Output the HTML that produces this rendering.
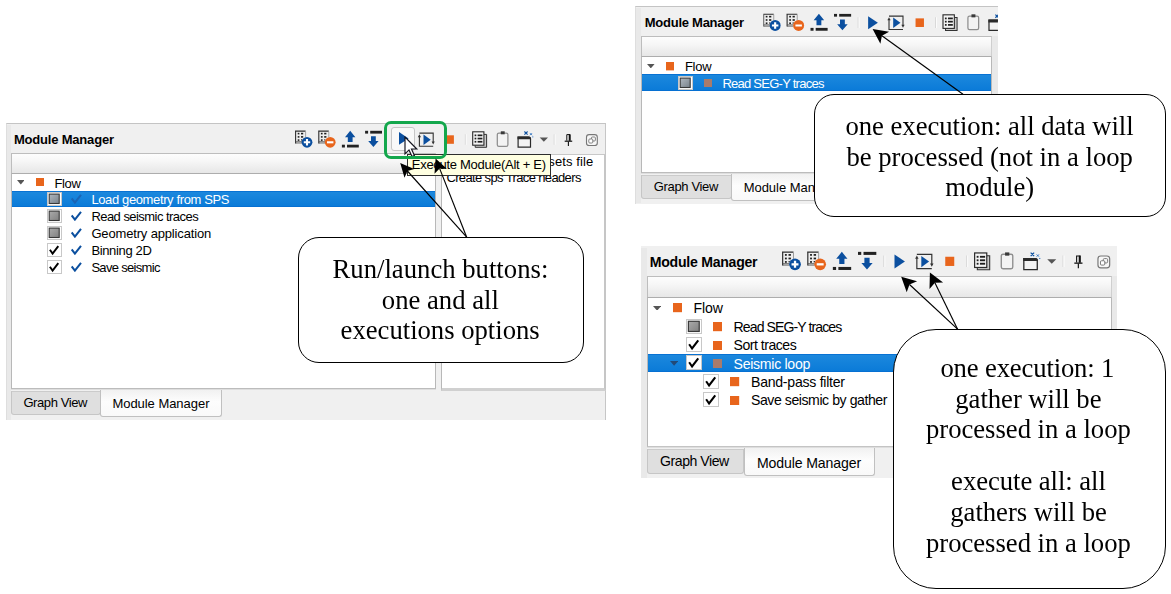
<!DOCTYPE html>
<html><head><meta charset="utf-8"><title>Module Manager</title>
<style>
html,body{margin:0;padding:0;background:#fff;}
body{width:1171px;height:594px;position:relative;overflow:hidden;font-family:"Liberation Sans",sans-serif;font-size:13px;color:#000;}
.abs,.abs>*{position:absolute;}
.ser{font-family:"Liberation Serif",serif;white-space:nowrap;will-change:opacity;}
.hdr{background:linear-gradient(#fdfdfd,#f6f6f6 40%,#eeeeee 70%,#e7e7e7);border:1px solid #bdbdbd;border-bottom:1px solid #adadad;border-right-color:#cfcfcf;box-sizing:border-box;}
.tree{background:#fff;border:1px solid #b8b8b8;border-top:none;border-bottom:1px solid #bcbcbc;box-shadow:0 1px 0 #dedede;box-sizing:border-box;}
.tab{box-sizing:border-box;border:1px solid #c4c4c4;border-top:none;border-radius:0 0 3px 3px;white-space:nowrap;text-align:center;letter-spacing:-0.1px;}
.tab.off{background:#dfdfdf;border-color:#c6c6c6;border-top:1px solid #cbcbcb;}
.tab.on{background:linear-gradient(#f1f1f1,#fdfdfd 45%,#f9f9f9);border-color:#c0c0c0;}
.callout{position:absolute;box-sizing:border-box;border:1.3px solid #000;background:#fff;font-family:"Liberation Serif",serif;font-size:26.6px;line-height:30.4px;text-align:center;white-space:nowrap;}
svg.ov{position:absolute;left:0;top:0;width:1171px;height:594px;pointer-events:none;}
</style></head><body>

<svg width="0" height="0" style="position:absolute">
<defs>
<g id="doc">
  <rect x="0.3" y="0.3" width="10.4" height="12.3" fill="#eeeeee"/>
  <path d="M0.6 0V12.9M0 0.6H10.6" stroke="#2e2e2e" stroke-width="1.1" fill="none"/>
  <path d="M0.6 11.2H7M0.6 12.5H7" stroke="#4a4a4a" stroke-width="0.75" fill="none"/>
  <path d="M10.6 1V7" stroke="#9a9a9a" stroke-width="0.9" fill="none"/>
  <g fill="#1e1e1e"><rect x="2.7" y="2.3" width="1.7" height="1.6"/><rect x="6" y="2.3" width="2.2" height="1.6"/><rect x="2.7" y="5.6" width="1.7" height="1.6"/><rect x="6" y="5.6" width="2.2" height="1.6"/><rect x="2.7" y="8.8" width="1.7" height="1.6"/><rect x="6" y="8.8" width="1.2" height="1.2"/></g>
</g>
<symbol id="tb" viewBox="0 -0.5 304 19" overflow="visible">
  <g transform="translate(0,-0.5)">
  <!-- add -->
  <use href="#doc"/>
  <circle cx="12" cy="11.8" r="5.4" fill="#0b4f9f"/>
  <path d="M12 8.6V15M8.8 11.8H15.2" stroke="#fff" stroke-width="2.1" fill="none"/>
  <!-- remove -->
  <use href="#doc" x="23.2"/>
  <circle cx="35.2" cy="11.8" r="5.4" fill="#e8651c"/>
  <path d="M32 11.8H38.4" stroke="#fff" stroke-width="2.1" fill="none"/>
  <!-- up -->
  <path d="M55.2 0.3L60.4 6.7H57.6V11.5H52.8V6.7H50Z" fill="#0b4f9f"/>
  <rect x="46.9" y="14.2" width="3" height="2.8" fill="#222"/><rect x="52" y="14.2" width="11.8" height="2.8" fill="#222"/>
  <!-- down -->
  <rect x="70.1" y="0.3" width="3" height="2.8" fill="#222"/><rect x="75.2" y="0.3" width="11.8" height="2.8" fill="#222"/>
  <path d="M78.4 16.6L73.2 10.5H76V5.8H80.8V10.5H83.6Z" fill="#0b4f9f"/>
  </g>
  <!-- sep -->
  <path d="M93.9 3.2V13.8" stroke="#d9d9d9" stroke-width="1"/><path d="M94.9 3.2V13.8" stroke="#fbfbfb" stroke-width="1"/>
  <!-- play -->
  <path d="M103.8 2.3L113.4 8.7L103.8 15.1Z" fill="#0b4f9f"/>
  <!-- exec all -->
  <path d="M124.4 2.1H138.2V11.5M138.2 15.3H124.4V5.5" stroke="#333" stroke-width="1.1" fill="none"/>
  <path d="M138.2 13.6L136.6 10.6H139.8Z" fill="#333"/><path d="M124.4 3.2L122.8 6.2H126Z" fill="#333"/>
  <path d="M128.5 3.5L135.7 8.7L128.5 13.9Z" fill="#0b4f9f"/>
  <!-- stop -->
  <rect x="150.6" y="4.3" width="8.3" height="8.5" fill="#e8651c"/>
  <!-- sep -->
  <path d="M170.3 3.2V13.8" stroke="#d9d9d9" stroke-width="1"/><path d="M171.3 3.2V13.8" stroke="#fbfbfb" stroke-width="1"/>
  <!-- list -->
  <path d="M180.2 14.4V16.3H191.6V3.4H189" stroke="#333" stroke-width="1" fill="#c9c9c9"/>
  <rect x="177.7" y="0.8" width="11.2" height="13.4" fill="#f4f4f4" stroke="#2a2a2a" stroke-width="1.1"/>
  <g fill="#1e1e1e"><rect x="179.6" y="3.5" width="1.7" height="1.7"/><rect x="182.6" y="3.5" width="4.8" height="1.7"/><rect x="179.6" y="6.7" width="1.7" height="1.7"/><rect x="182.6" y="6.7" width="4.8" height="1.7"/><rect x="179.6" y="9.9" width="1.7" height="1.7"/><rect x="182.6" y="9.9" width="4.8" height="1.7"/></g>
  <!-- clipboard -->
  <rect x="202.3" y="2" width="10.6" height="13.4" rx="1.6" fill="#f3f3f3" stroke="#8e8e8e" stroke-width="1.25"/>
  <rect x="205.8" y="0.3" width="3.9" height="3" fill="#3a3a3a"/>
  <!-- window -->
  <path d="M223.1 6H233.6Q235.5 6 235.5 8V16.2H223.1Z" fill="#f3f3f3" stroke="#2a2a2a" stroke-width="1.2"/>
  <path d="M222.5 5.5H233.8Q236.1 5.5 236.1 8.3H222.5Z" fill="#2a2a2a"/>
  <path d="M229.4 0.5L232.6 3.7M232.6 0.5L229.4 3.7" stroke="#0b4f9f" stroke-width="1.1"/>
  <path d="M235 2.2L237 4.2M237 2.2L235 4.2" stroke="#2a6fc0" stroke-width="0.9"/>
  <rect x="237.3" y="5.4" width="1" height="1" fill="#2a6fc0"/>
  <!-- dropdown -->
  <path d="M244.7 6.6H253L248.85 10.7Z" fill="#555"/>
  <!-- sep -->
  <path d="M259.2 3.2V13.8" stroke="#d9d9d9" stroke-width="1"/><path d="M260.2 3.2V13.8" stroke="#fbfbfb" stroke-width="1"/>
  <!-- pin -->
  <path d="M271.8 9.6V3.6H275V9.6" stroke="#111" stroke-width="1" fill="#f0f0f0"/>
  <path d="M274.6 3.3V9.8" stroke="#111" stroke-width="1.7"/>
  <path d="M269.7 10.2H277.2" stroke="#111" stroke-width="1.2"/>
  <path d="M273.4 10.5V15" stroke="#111" stroke-width="1.1"/>
  <!-- float -->
  <rect x="291.5" y="3.6" width="10.8" height="10.9" rx="2.6" fill="#f7f7f7" stroke="#777" stroke-width="1.1"/>
  <rect x="296.4" y="6" width="4" height="4" rx="1" fill="#f7f7f7" stroke="#777" stroke-width="0.9"/>
  <rect x="293.8" y="8" width="4" height="4" rx="1" fill="#fff" stroke="#777" stroke-width="0.9"/>
</symbol>
</defs></svg>


<div class="abs " style="left:6px;top:123px;width:600px;height:297px;background:#f0f0f0;border-top:1px solid #c4c4c4;border-left:1px solid #dedede;border-right:1px solid #c6c6c6;box-sizing:border-box;"></div>
<div class="abs " style="left:7px;top:125px;width:4px;height:295px;background:#e9e9e9;"></div>
<div class="abs" style="left:13.90px;top:132.70px;font-size:13px;line-height:13px;letter-spacing:-0.191px;white-space:nowrap;font-weight:bold;">Module Manager</div>
<svg class="abs" style="left:295px;top:129.60px;width:304.00px;height:19.00px;overflow:visible;" viewBox="0 -0.5 304 19"><use href="#tb"/></svg>
<div class="abs " style="left:387px;top:131px;width:4px;height:14px;background:#f0f0f0;"></div>
<div class="abs " style="left:391px;top:127px;width:24px;height:24px;border:1px solid #c6c6c6;border-radius:3px;background:#f9f9f9;box-sizing:border-box;"></div>
<svg class="abs" style="left:399px;top:132.4px;width:9.6px;height:12.8px" viewBox="0 0 9.6 12.8"><path d="M0 0L9.6 6.4L0 12.8Z" fill="#0b4f9f"/></svg>
<div class="abs hdr" style="left:11px;top:153px;width:425px;height:21px;"></div>
<div class="abs tree" style="left:11px;top:174px;width:425px;height:215px;"></div>
<div class="abs " style="left:441px;top:154px;width:165px;height:237px;background:#fff;border:1px solid #b8b8b8;border-top:1px solid #c8c8c8;border-right:2px solid #c6c6c6;border-bottom:3px solid #d0d0d0;box-sizing:border-box;"></div>
<div class="abs" style="left:533.80px;top:155.40px;font-size:13px;line-height:13px;letter-spacing:0.1px;white-space:nowrap;">offsets file</div>
<div class="abs" style="left:446.40px;top:171.10px;font-size:13px;line-height:13px;letter-spacing:-0.634px;white-space:nowrap;">Create sps Trace headers</div>
<svg class="abs" style="left:16.7px;top:180.2px;width:7.6px;height:4.4px" viewBox="0 0 7.6 4.4"><path d="M0 0H7.6L3.8 4.4Z" fill="#555"/></svg>
<svg class="abs" style="left:35.6px;top:178.1px;width:8.4px;height:8.4px" viewBox="0 0 1 1"><rect width="1" height="1" fill="#e8651c"/></svg>
<div class="abs" style="left:54.40px;top:176.50px;font-size:13px;line-height:13px;letter-spacing:-0.318px;white-space:nowrap;">Flow</div>
<div class="abs " style="left:12px;top:191px;width:423px;height:16.4px;background:linear-gradient(#1c88dd,#0b7bd8);border-top:1px solid #0872d3;border-bottom:1px solid #0670d2;box-sizing:border-box;"></div>
<div class="abs" style="left:47.3px;top:192.2px;width:14.50px;height:13.80px;background:#fff;box-shadow:inset 0 0 0 1px #c8c8c8;"><svg class="abs" style="left:0;top:0;width:14.50px;height:13.80px" viewBox="0 0 14.5 13.8"><defs><linearGradient id="g47_192" x1="0" y1="0" x2="1" y2="1"><stop offset="0" stop-color="#b0b8c0"/><stop offset="1" stop-color="#78818a"/></linearGradient></defs><rect x="2.2" y="2.1" width="10" height="9.4" fill="url(#g47_192)" stroke="#383838" stroke-width="1.1"/></svg></div>
<svg class="abs" style="left:71.4px;top:193.7px;width:11.00px;height:10.00px" viewBox="0 0 11 10"><path d="M0.7 4.4L3.9 8.6L10 0.8" stroke="#1b64b4" stroke-width="2" fill="none"/></svg>
<div class="abs" style="left:91.40px;top:193.30px;font-size:13px;line-height:13px;letter-spacing:-0.375px;white-space:nowrap;color:#fff;">Load geometry from SPS</div>
<div class="abs" style="left:47.3px;top:209.2px;width:14.50px;height:13.80px;background:#fff;box-shadow:inset 0 0 0 1px #c8c8c8;"><svg class="abs" style="left:0;top:0;width:14.50px;height:13.80px" viewBox="0 0 14.5 13.8"><defs><linearGradient id="g47_209" x1="0" y1="0" x2="1" y2="1"><stop offset="0" stop-color="#ababab"/><stop offset="1" stop-color="#808080"/></linearGradient></defs><rect x="2.2" y="2.1" width="10" height="9.4" fill="url(#g47_209)" stroke="#383838" stroke-width="1.1"/></svg></div>
<svg class="abs" style="left:71.4px;top:210.7px;width:11.00px;height:10.00px" viewBox="0 0 11 10"><path d="M0.7 4.4L3.9 8.6L10 0.8" stroke="#0b4f9f" stroke-width="2" fill="none"/></svg>
<div class="abs" style="left:91.40px;top:210.30px;font-size:13px;line-height:13px;letter-spacing:-0.541px;white-space:nowrap;">Read seismic traces</div>
<div class="abs" style="left:47.3px;top:226.2px;width:14.50px;height:13.80px;background:#fff;box-shadow:inset 0 0 0 1px #c8c8c8;"><svg class="abs" style="left:0;top:0;width:14.50px;height:13.80px" viewBox="0 0 14.5 13.8"><defs><linearGradient id="g47_226" x1="0" y1="0" x2="1" y2="1"><stop offset="0" stop-color="#ababab"/><stop offset="1" stop-color="#808080"/></linearGradient></defs><rect x="2.2" y="2.1" width="10" height="9.4" fill="url(#g47_226)" stroke="#383838" stroke-width="1.1"/></svg></div>
<svg class="abs" style="left:71.4px;top:227.7px;width:11.00px;height:10.00px" viewBox="0 0 11 10"><path d="M0.7 4.4L3.9 8.6L10 0.8" stroke="#0b4f9f" stroke-width="2" fill="none"/></svg>
<div class="abs" style="left:91.40px;top:227.30px;font-size:13px;line-height:13px;letter-spacing:-0.16px;white-space:nowrap;">Geometry application</div>
<div class="abs" style="left:47.3px;top:243.2px;width:14.50px;height:13.80px;background:#fff;box-shadow:inset 0 0 0 1px #c8c8c8;"><svg class="abs" style="left:0;top:0;width:14.50px;height:13.80px" viewBox="0 0 14.5 13.8"><path d="M2.9 6.7L5.6 10.6L11.3 3.1" stroke="#000" stroke-width="1.9" fill="none"/></svg></div>
<svg class="abs" style="left:71.4px;top:244.7px;width:11.00px;height:10.00px" viewBox="0 0 11 10"><path d="M0.7 4.4L3.9 8.6L10 0.8" stroke="#0b4f9f" stroke-width="2" fill="none"/></svg>
<div class="abs" style="left:91.40px;top:244.30px;font-size:13px;line-height:13px;letter-spacing:-0.357px;white-space:nowrap;">Binning 2D</div>
<div class="abs" style="left:47.3px;top:260.2px;width:14.50px;height:13.80px;background:#fff;box-shadow:inset 0 0 0 1px #c8c8c8;"><svg class="abs" style="left:0;top:0;width:14.50px;height:13.80px" viewBox="0 0 14.5 13.8"><path d="M2.9 6.7L5.6 10.6L11.3 3.1" stroke="#000" stroke-width="1.9" fill="none"/></svg></div>
<svg class="abs" style="left:71.4px;top:261.7px;width:11.00px;height:10.00px" viewBox="0 0 11 10"><path d="M0.7 4.4L3.9 8.6L10 0.8" stroke="#0b4f9f" stroke-width="2" fill="none"/></svg>
<div class="abs" style="left:91.40px;top:261.30px;font-size:13px;line-height:13px;letter-spacing:-0.689px;white-space:nowrap;">Save seismic</div>
<div class="abs tab off" style="left:11px;top:391px;width:90px;height:23.5px;"></div>
<div class="abs" style="left:23.40px;top:395.80px;font-size:13px;line-height:13px;letter-spacing:-0.399px;white-space:nowrap;">Graph View</div>
<div class="abs tab on" style="left:100px;top:390px;width:121.5px;height:27px;"></div>
<div class="abs" style="left:112.40px;top:397.10px;font-size:13px;line-height:13px;letter-spacing:-0.036px;white-space:nowrap;">Module Manager</div>
<div class="abs " style="left:407px;top:154px;width:144px;height:22px;background:#ffffe1;border:1px solid #2e2e2e;box-sizing:border-box;"></div>
<div class="abs" style="left:411.80px;top:158.40px;font-size:13px;line-height:13px;letter-spacing:-0.288px;white-space:nowrap;">Execute Module(Alt + E)</div>
<svg class="abs" style="left:404.3px;top:136.1px;width:15px;height:23px" viewBox="0 0 15 23"><path d="M1 1V17.8L5 13.9L8 20.6L10.4 19.5L7.5 13H12.8Z" fill="#fff" stroke="#14141e" stroke-width="1.15" stroke-linejoin="miter"/></svg>
<div class="abs " style="left:384px;top:121px;width:63.4px;height:38px;border:3px solid #13a74c;border-radius:7px;box-sizing:border-box;"></div>
<div class="abs callout" style="left:298.2px;top:237.2px;width:286px;height:125.6px;border-radius:21px;"></div>
<div class="abs ser" style="left:332.50px;top:256.46px;font-size:26.67px;line-height:26.67px;letter-spacing:0.018px;">Run/launch buttons:</div>
<div class="abs ser" style="left:381.80px;top:287.06px;font-size:26.67px;line-height:26.67px;letter-spacing:0.005px;">one and all</div>
<div class="abs ser" style="left:340.60px;top:317.26px;font-size:26.67px;line-height:26.67px;letter-spacing:-0.003px;">executions options</div>
<div class="abs " style="left:635px;top:6px;width:363px;height:197.5px;background:#f0f0f0;border-top:1px solid #c4c4c4;border-left:1px solid #dedede;box-sizing:border-box;"></div>
<div class="abs " style="left:636px;top:8px;width:5px;height:195px;background:#e9e9e9;"></div>
<div class="abs" style="left:644.80px;top:16.00px;font-size:13px;line-height:13px;letter-spacing:-0.26px;white-space:nowrap;font-weight:bold;">Module Manager</div>
<svg class="abs" style="left:763.4px;top:13.49px;width:307.95px;height:19.25px;overflow:visible;clip-path:inset(0 73.4px 0 0);" viewBox="0 -0.5 304 19"><use href="#tb"/></svg>
<div class="abs hdr" style="left:641px;top:36px;width:351px;height:21px;"></div>
<div class="abs " style="left:992px;top:36px;width:6px;height:167.5px;background:#e9e9e9;"></div>
<div class="abs tree" style="left:641px;top:57px;width:351px;height:116px;"></div>
<svg class="abs" style="left:647px;top:64px;width:7.6px;height:4.4px" viewBox="0 0 7.6 4.4"><path d="M0 0H7.6L3.8 4.4Z" fill="#555"/></svg>
<svg class="abs" style="left:666px;top:62.2px;width:8.4px;height:8.4px" viewBox="0 0 1 1"><rect width="1" height="1" fill="#e8651c"/></svg>
<div class="abs" style="left:684.90px;top:59.70px;font-size:13px;line-height:13px;letter-spacing:-0.218px;white-space:nowrap;">Flow</div>
<div class="abs " style="left:642px;top:74.2px;width:349px;height:17px;background:linear-gradient(#1c88dd,#0b7bd8);border-top:1px solid #0872d3;border-bottom:1px solid #0670d2;box-sizing:border-box;"></div>
<div class="abs" style="left:678px;top:75.9px;width:14.50px;height:13.80px;background:#fff;box-shadow:inset 0 0 0 1px #c8c8c8;"><svg class="abs" style="left:0;top:0;width:14.50px;height:13.80px" viewBox="0 0 14.5 13.8"><defs><linearGradient id="g678_75" x1="0" y1="0" x2="1" y2="1"><stop offset="0" stop-color="#b0b8c0"/><stop offset="1" stop-color="#78818a"/></linearGradient></defs><rect x="2.2" y="2.1" width="10" height="9.4" fill="url(#g678_75)" stroke="#383838" stroke-width="1.1"/></svg></div>
<svg class="abs" style="left:703.6px;top:78.9px;width:8.4px;height:8.4px" viewBox="0 0 1 1"><rect width="1" height="1" fill="#a87b6b"/></svg>
<div class="abs" style="left:722.40px;top:77.00px;font-size:13px;line-height:13px;letter-spacing:-0.745px;white-space:nowrap;color:#fff;">Read SEG-Y traces</div>
<div class="abs tab off" style="left:641px;top:174.5px;width:90.5px;height:24.6px;"></div>
<div class="abs" style="left:653.80px;top:180.10px;font-size:13px;line-height:13px;letter-spacing:-0.343px;white-space:nowrap;">Graph View</div>
<div class="abs tab on" style="left:730.5px;top:174px;width:121.5px;height:27.2px;"></div>
<div class="abs" style="left:743.70px;top:181.30px;font-size:13px;line-height:13px;letter-spacing:-0.036px;white-space:nowrap;">Module Manager</div>
<div class="abs callout" style="left:814.4px;top:94.2px;width:351.6px;height:122.6px;border-radius:20px;"></div>
<div class="abs ser" style="left:845.50px;top:113.26px;font-size:26.67px;line-height:26.67px;letter-spacing:-0.022px;">one execution: all data will</div>
<div class="abs ser" style="left:846.40px;top:143.66px;font-size:26.67px;line-height:26.67px;letter-spacing:0.001px;">be processed (not in a loop</div>
<div class="abs ser" style="left:945.30px;top:173.86px;font-size:26.67px;line-height:26.67px;letter-spacing:-0.007px;">module)</div>
<div class="abs " style="left:641px;top:246px;width:476px;height:232px;background:#f0f0f0;"></div>
<div class="abs " style="left:641px;top:248px;width:6px;height:230px;background:#e9e9e9;"></div>
<div class="abs" style="left:649.80px;top:254.76px;font-size:14.1px;line-height:14.1px;letter-spacing:-0.262px;white-space:nowrap;font-weight:bold;">Module Manager</div>
<svg class="abs" style="left:781.9px;top:251.01px;width:329.54px;height:20.60px;overflow:visible;" viewBox="0 -0.5 304 19"><use href="#tb"/></svg>
<div class="abs hdr" style="left:647px;top:276px;width:464.5px;height:22.4px;"></div>
<div class="abs " style="left:1111.5px;top:276px;width:5.5px;height:202px;background:#e9e9e9;"></div>
<div class="abs tree" style="left:647px;top:298px;width:464.5px;height:149.4px;border-bottom-color:#c4c4c4;"></div>
<svg class="abs" style="left:652.6px;top:305.8px;width:8.2px;height:4.7px" viewBox="0 0 8.2 4.7"><path d="M0 0H8.2L4.1 4.7Z" fill="#555"/></svg>
<svg class="abs" style="left:672.9px;top:303.4px;width:9.2px;height:9.2px" viewBox="0 0 1 1"><rect width="1" height="1" fill="#e8651c"/></svg>
<div class="abs" style="left:693.40px;top:301.46px;font-size:14.1px;line-height:14.1px;letter-spacing:-0.089px;white-space:nowrap;">Flow</div>
<div class="abs" style="left:686.0px;top:318.7px;width:15.72px;height:14.96px;background:#fff;box-shadow:inset 0 0 0 1px #c8c8c8;"><svg class="abs" style="left:0;top:0;width:15.72px;height:14.96px" viewBox="0 0 14.5 13.8"><defs><linearGradient id="g686_318" x1="0" y1="0" x2="1" y2="1"><stop offset="0" stop-color="#ababab"/><stop offset="1" stop-color="#808080"/></linearGradient></defs><rect x="2.2" y="2.1" width="10" height="9.4" fill="url(#g686_318)" stroke="#383838" stroke-width="1.1"/></svg></div>
<svg class="abs" style="left:713.0px;top:322.40000000000003px;width:9.2px;height:9.2px" viewBox="0 0 1 1"><rect width="1" height="1" fill="#e8651c"/></svg>
<div class="abs" style="left:733.60px;top:320.06px;font-size:14.1px;line-height:14.1px;letter-spacing:-0.926px;white-space:nowrap;">Read SEG-Y traces</div>
<div class="abs" style="left:686.0px;top:337.05px;width:15.72px;height:14.96px;background:#fff;box-shadow:inset 0 0 0 1px #c8c8c8;"><svg class="abs" style="left:0;top:0;width:15.72px;height:14.96px" viewBox="0 0 14.5 13.8"><path d="M2.9 6.7L5.6 10.6L11.3 3.1" stroke="#000" stroke-width="1.9" fill="none"/></svg></div>
<svg class="abs" style="left:713.0px;top:340.75000000000006px;width:9.2px;height:9.2px" viewBox="0 0 1 1"><rect width="1" height="1" fill="#e8651c"/></svg>
<div class="abs" style="left:733.60px;top:338.41px;font-size:14.1px;line-height:14.1px;letter-spacing:-0.506px;white-space:nowrap;">Sort traces</div>
<div class="abs " style="left:648px;top:354.2px;width:462.5px;height:17.6px;background:linear-gradient(#1c88dd,#0b7bd8);border-top:1px solid #0872d3;border-bottom:1px solid #0670d2;box-sizing:border-box;"></div>
<svg class="abs" style="left:669.8px;top:361.0px;width:8.2px;height:4.7px" viewBox="0 0 8.2 4.7"><path d="M0 0H8.2L4.1 4.7Z" fill="#224a78"/></svg>
<div class="abs" style="left:686.0px;top:355.4px;width:15.72px;height:14.96px;background:#fff;box-shadow:inset 0 0 0 1px #c8c8c8;"><svg class="abs" style="left:0;top:0;width:15.72px;height:14.96px" viewBox="0 0 14.5 13.8"><path d="M2.9 6.7L5.6 10.6L11.3 3.1" stroke="#000" stroke-width="1.9" fill="none"/></svg></div>
<svg class="abs" style="left:713.0px;top:359.1px;width:9.2px;height:9.2px" viewBox="0 0 1 1"><rect width="1" height="1" fill="#a87b6b"/></svg>
<div class="abs" style="left:733.60px;top:356.76px;font-size:14.1px;line-height:14.1px;letter-spacing:-0.291px;white-space:nowrap;color:#fff;">Seismic loop</div>
<div class="abs" style="left:703.4px;top:373.75px;width:15.72px;height:14.96px;background:#fff;box-shadow:inset 0 0 0 1px #c8c8c8;"><svg class="abs" style="left:0;top:0;width:15.72px;height:14.96px" viewBox="0 0 14.5 13.8"><path d="M2.9 6.7L5.6 10.6L11.3 3.1" stroke="#000" stroke-width="1.9" fill="none"/></svg></div>
<svg class="abs" style="left:730.4px;top:377.45000000000005px;width:9.2px;height:9.2px" viewBox="0 0 1 1"><rect width="1" height="1" fill="#e8651c"/></svg>
<div class="abs" style="left:751.00px;top:375.11px;font-size:14.1px;line-height:14.1px;letter-spacing:-0.261px;white-space:nowrap;">Band-pass filter</div>
<div class="abs" style="left:703.4px;top:392.1px;width:15.72px;height:14.96px;background:#fff;box-shadow:inset 0 0 0 1px #c8c8c8;"><svg class="abs" style="left:0;top:0;width:15.72px;height:14.96px" viewBox="0 0 14.5 13.8"><path d="M2.9 6.7L5.6 10.6L11.3 3.1" stroke="#000" stroke-width="1.9" fill="none"/></svg></div>
<svg class="abs" style="left:730.4px;top:395.80000000000007px;width:9.2px;height:9.2px" viewBox="0 0 1 1"><rect width="1" height="1" fill="#e8651c"/></svg>
<div class="abs" style="left:751.00px;top:393.46px;font-size:14.1px;line-height:14.1px;letter-spacing:-0.443px;white-space:nowrap;">Save seismic by gather</div>
<div class="abs tab off" style="left:647px;top:449px;width:97.2px;height:25px;"></div>
<div class="abs" style="left:660.00px;top:454.46px;font-size:14.1px;line-height:14.1px;letter-spacing:-0.455px;white-space:nowrap;">Graph View</div>
<div class="abs tab on" style="left:743.8px;top:448px;width:131px;height:28px;"></div>
<div class="abs" style="left:756.90px;top:455.86px;font-size:14.1px;line-height:14.1px;letter-spacing:-0.113px;white-space:nowrap;">Module Manager</div>
<div class="abs callout" style="left:893.2px;top:329.2px;width:272.8px;height:259.6px;border-radius:43px;"></div>
<div class="abs ser" style="left:940.40px;top:355.46px;font-size:26.67px;line-height:26.67px;letter-spacing:-0.145px;">one execution: 1</div>
<div class="abs ser" style="left:955.30px;top:385.66px;font-size:26.67px;line-height:26.67px;letter-spacing:-0.028px;">gather will be</div>
<div class="abs ser" style="left:926.00px;top:415.56px;font-size:26.67px;line-height:26.67px;letter-spacing:-0.015px;">processed in a loop</div>
<div class="abs ser" style="left:951.10px;top:467.96px;font-size:26.67px;line-height:26.67px;letter-spacing:-0.041px;">execute all: all</div>
<div class="abs ser" style="left:950.30px;top:498.96px;font-size:26.67px;line-height:26.67px;letter-spacing:-0.024px;">gathers will be</div>
<div class="abs ser" style="left:926.00px;top:529.56px;font-size:26.67px;line-height:26.67px;letter-spacing:-0.015px;">processed in a loop</div>
<svg class="ov" viewBox="0 0 1171 594">
<line x1="466.7" y1="237.2" x2="407.4" y2="171.0" stroke="#000" stroke-width="1.15"/><polygon points="400.2,163.0 414.3,168.9 407.4,171.0 404.5,177.7" fill="#000"/>
<line x1="466.7" y1="237.2" x2="439.6" y2="168.4" stroke="#000" stroke-width="1.15"/><polygon points="435.6,158.4 446.8,168.8 439.6,168.4 434.5,173.7" fill="#000"/>
<line x1="963" y1="94.2" x2="881.9" y2="35.7" stroke="#000" stroke-width="1.15"/><polygon points="872.6,29.0 889.1,31.8 881.9,35.7 880.4,43.8" fill="#000"/>
<line x1="957.6" y1="329.2" x2="909.5" y2="284.5" stroke="#000" stroke-width="1.15"/><polygon points="901.2,276.8 917.1,281.2 909.5,284.5 906.7,292.3" fill="#000"/>
<line x1="957.6" y1="329.2" x2="934.9" y2="282.7" stroke="#000" stroke-width="1.15"/><polygon points="929.9,272.6 943.1,282.4 934.9,282.7 929.5,289.1" fill="#000"/>
</svg>
</body></html>
